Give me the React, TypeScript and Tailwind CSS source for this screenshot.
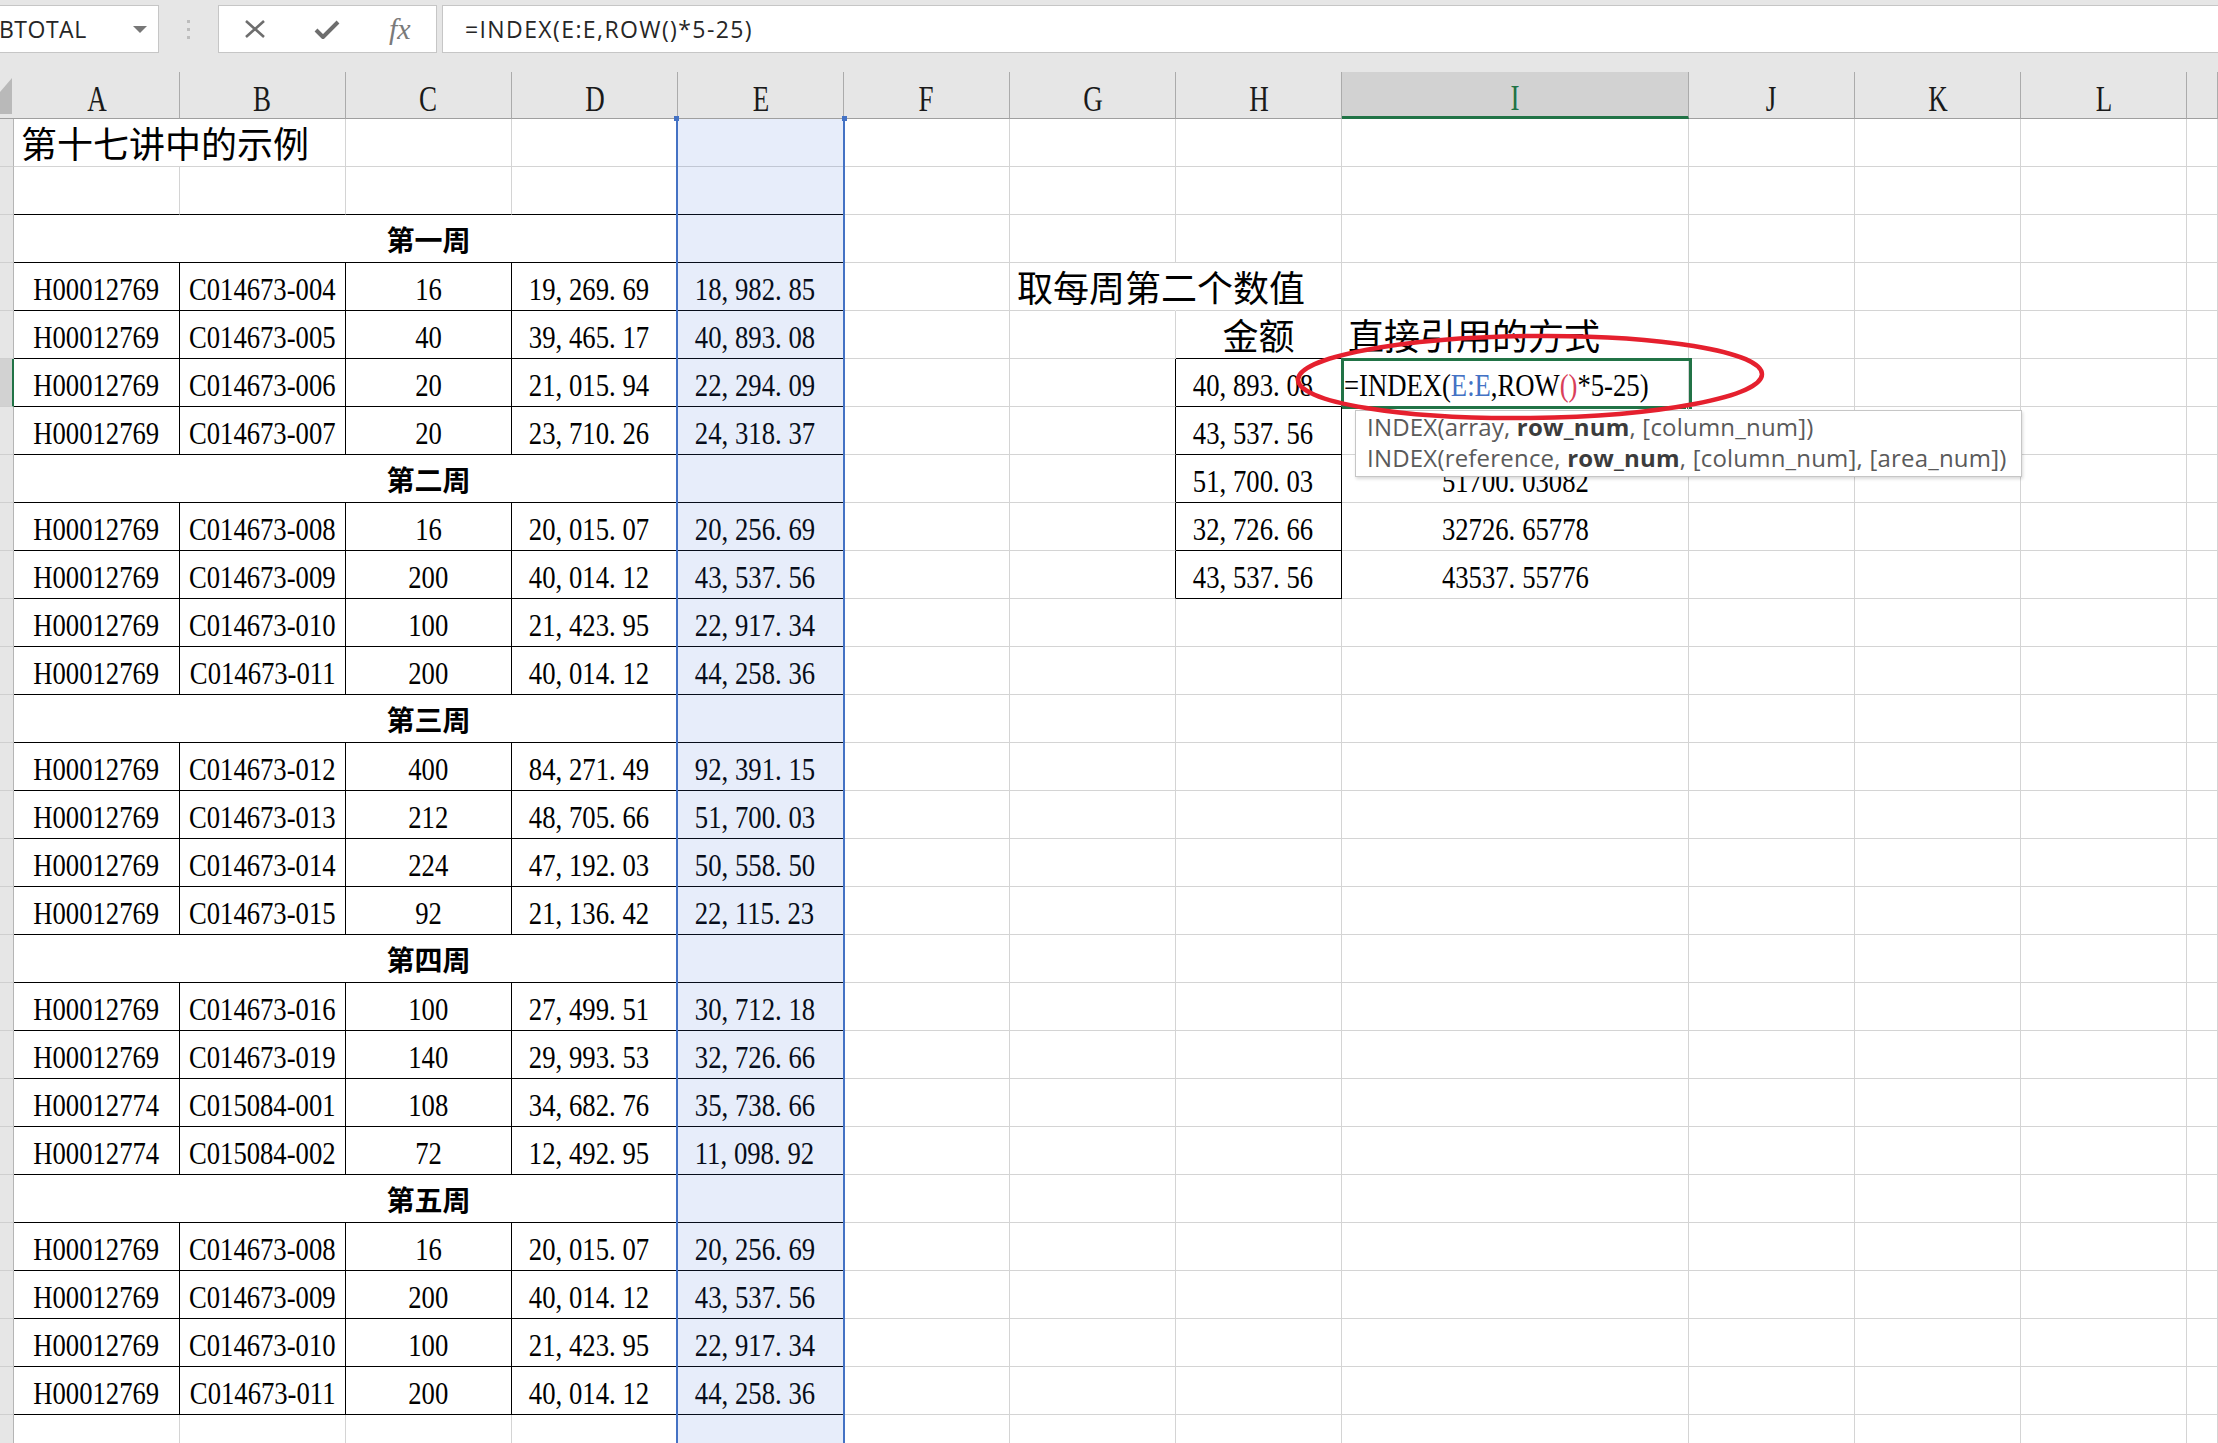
import React from 'react';

const SERIF = "font-['Liberation_Serif','Noto_Sans_CJK_SC',serif]";
const UI = "font-['Open_Sans','Noto_Sans_CJK_SC',sans-serif]";
const GRID =
  'grid grid-cols-[14px_166px_166px_166px_166px_166px_166px_166px_166px_347px_166px_166px_166px_1fr]';
const LETTERS = ['A', 'B', 'C', 'D', 'E', 'F', 'G', 'H', 'I', 'J', 'K', 'L', 'M'];
const RIGHT_COLS = ['F', 'G', 'H', 'I', 'J', 'K', 'L', 'M'];

type DataRow = [string, string, string, string, string];

const weeks: { title: string; rows: DataRow[] }[] = [
  {
    title: '第一周',
    rows: [
      ['H00012769', 'C014673-004', '16', '19,269.69', '18,982.85'],
      ['H00012769', 'C014673-005', '40', '39,465.17', '40,893.08'],
      ['H00012769', 'C014673-006', '20', '21,015.94', '22,294.09'],
      ['H00012769', 'C014673-007', '20', '23,710.26', '24,318.37'],
    ],
  },
  {
    title: '第二周',
    rows: [
      ['H00012769', 'C014673-008', '16', '20,015.07', '20,256.69'],
      ['H00012769', 'C014673-009', '200', '40,014.12', '43,537.56'],
      ['H00012769', 'C014673-010', '100', '21,423.95', '22,917.34'],
      ['H00012769', 'C014673-011', '200', '40,014.12', '44,258.36'],
    ],
  },
  {
    title: '第三周',
    rows: [
      ['H00012769', 'C014673-012', '400', '84,271.49', '92,391.15'],
      ['H00012769', 'C014673-013', '212', '48,705.66', '51,700.03'],
      ['H00012769', 'C014673-014', '224', '47,192.03', '50,558.50'],
      ['H00012769', 'C014673-015', '92', '21,136.42', '22,115.23'],
    ],
  },
  {
    title: '第四周',
    rows: [
      ['H00012769', 'C014673-016', '100', '27,499.51', '30,712.18'],
      ['H00012769', 'C014673-019', '140', '29,993.53', '32,726.66'],
      ['H00012774', 'C015084-001', '108', '34,682.76', '35,738.66'],
      ['H00012774', 'C015084-002', '72', '12,492.95', '11,098.92'],
    ],
  },
  {
    title: '第五周',
    rows: [
      ['H00012769', 'C014673-008', '16', '20,015.07', '20,256.69'],
      ['H00012769', 'C014673-009', '200', '40,014.12', '43,537.56'],
      ['H00012769', 'C014673-010', '100', '21,423.95', '22,917.34'],
      ['H00012769', 'C014673-011', '200', '40,014.12', '44,258.36'],
    ],
  },
];

type Left =
  | { kind: 'title' }
  | { kind: 'blank' }
  | { kind: 'week'; title: string }
  | { kind: 'data'; cells: DataRow }
  | { kind: 'empty' };

const leftRows: Left[] = [{ kind: 'title' }, { kind: 'blank' }];
weeks.forEach((w) => {
  leftRows.push({ kind: 'week', title: w.title });
  w.rows.forEach((cells) => leftRows.push({ kind: 'data', cells }));
});
leftRows.push({ kind: 'empty' });

// H6:H10 and I8:I10 (I7 sits under the tooltip)
const amounts = ['40,893.08', '43,537.56', '51,700.03', '32,726.66', '43,537.56'];
const direct = ['', '', '51700.03082', '32726.65778', '43537.55776'];

const base = 'flex min-w-0 items-center whitespace-nowrap leading-none pt-[6px]';

// half-width latin in the sheet font is tall and narrow, punctuation takes a full half-width slot
const Narrow: React.FC<{ children: React.ReactNode; left?: boolean }> = ({ children, left }) => (
  <span className={`inline-block scale-x-[0.86] text-[31px] ${left ? 'origin-left' : ''}`}>{children}</span>
);

function Num({ value }: { value: string }) {
  const parts = value.split(/([,.])/);
  return (
    <Narrow>
      {parts.map((p, i) =>
        p === ',' || p === '.' ? (
          <span key={i} className="mr-[8px]">
            {p}
          </span>
        ) : (
          <React.Fragment key={i}>{p}</React.Fragment>
        ),
      )}
    </Narrow>
  );
}

function LeftCells({ row }: { row: Left }) {
  if (row.kind === 'week') {
    return (
      <div className={`${base} col-span-5 justify-center border-r border-b border-black text-[28px] font-bold`}>
        {row.title}
      </div>
    );
  }
  if (row.kind === 'data') {
    return (
      <>
        {row.cells.map((v, i) => (
          <div
            key={i}
            className={`${base} justify-center border-r border-b border-black ${i >= 3 ? 'pr-3' : ''}`}
          >
            {i >= 3 ? <Num value={v} /> : <Narrow>{v}</Narrow>}
          </div>
        ))}
      </>
    );
  }
  if (row.kind === 'title') {
    return (
      <>
        <div className={`${base} justify-start border-b border-b-[#d4d4d4] pl-[7px] text-[36px]`}>
          第十七讲中的示例
        </div>
        <div className="border-r border-b border-[#d4d4d4]" />
        <div className="border-r border-b border-[#d4d4d4]" />
        <div className="border-r border-b border-[#d4d4d4]" />
        <div className="border-r border-b border-[#d4d4d4]" />
      </>
    );
  }
  if (row.kind === 'blank') {
    return (
      <>
        {[0, 1, 2, 3, 4].map((i) => (
          <div key={i} className="border-r border-b border-r-[#d4d4d4] border-b-black" />
        ))}
      </>
    );
  }
  return (
    <>
      {[0, 1, 2, 3, 4].map((i) => (
        <div key={i} className="border-r border-b border-[#d4d4d4]" />
      ))}
    </>
  );
}

function RightCells({ r }: { r: number }) {
  return (
    <>
      {RIGHT_COLS.map((col) => {
        let rb = 'border-r-[#d4d4d4]';
        let bb = 'border-b-[#d4d4d4]';
        let align = 'justify-center';
        let content: React.ReactNode = null;
        let active = false;

        if (col === 'G' && r === 4) {
          rb = 'border-r-transparent';
          align = 'justify-start pl-[7px] text-[36px]';
          content = '取每周第二个数值';
        }
        if (col === 'G' && r >= 6 && r <= 10) rb = 'border-r-black';
        if (col === 'H' && r === 5) {
          bb = 'border-b-black';
          align = 'justify-center text-[36px]';
          content = '金额';
        }
        if (col === 'H' && r >= 6 && r <= 10) {
          rb = 'border-r-black';
          bb = 'border-b-black';
          align = 'justify-center pr-3';
          content = <Num value={amounts[r - 6]} />;
        }
        if (col === 'I' && r === 5) {
          align = 'justify-start pl-[6px] text-[36px]';
          content = '直接引用的方式';
        }
        if (col === 'I' && r === 6) {
          active = true;
          align = 'justify-start pl-[2px]';
          content = (
            <Narrow left>
              =INDEX(<span className="text-[#4472c4]">E:E</span>,ROW
              <span className="text-[#d9405a]">()</span>*5-25)
            </Narrow>
          );
        }
        if (col === 'I' && r >= 8 && r <= 10) content = <Num value={direct[r - 6]} />;

        return (
          <div key={col} className={`${base} relative border-r border-b ${rb} ${bb} ${align}`}>
            {content}
            {active && (
              <>
                <div className="pointer-events-none absolute -left-px -top-px h-[51px] w-[351px] border-[3px] border-[#217346]" />
                <div className="pointer-events-none absolute -right-[5px] -bottom-[4px] h-[7px] w-[7px] border border-white bg-[#217346]" />
              </>
            )}
          </div>
        );
      })}
    </>
  );
}

function FormulaBar() {
  return (
    <div className={`flex h-[72px] items-start bg-[#e6e6e6] pt-[5px] ${UI}`}>
      <div className="flex h-[48px] w-[159px] items-center justify-between border border-l-0 border-[#c6c6c6] bg-white pr-[11px] text-[23px] text-[#262626]">
        <span className="-ml-[1px] tracking-[0.5px]">BTOTAL</span>
        <svg width="14" height="7" viewBox="0 0 14 7">
          <polygon points="0,0 14,0 7,7" fill="#777" />
        </svg>
      </div>
      <div className="flex h-[48px] w-[59px] flex-col items-center justify-center gap-[5px]">
        <span className="h-[3px] w-[3px] bg-[#bdbdbd]" />
        <span className="h-[3px] w-[3px] bg-[#bdbdbd]" />
        <span className="h-[3px] w-[3px] bg-[#bdbdbd]" />
      </div>
      <div className="flex h-[48px] w-[219px] items-center border border-[#c6c6c6] bg-white">
        <div className="flex flex-1 justify-center">
          <svg width="22" height="20" viewBox="0 0 22 20">
            <path d="M2 2 L20 18 M20 2 L2 18" stroke="#6e6e6e" strokeWidth="2.6" fill="none" />
          </svg>
        </div>
        <div className="flex flex-1 justify-center">
          <svg width="26" height="21" viewBox="0 0 26 21">
            <path d="M2 11 L9 18 L24 3" stroke="#6e6e6e" strokeWidth="4" fill="none" strokeLinejoin="round" />
          </svg>
        </div>
        <div className="flex flex-1 justify-center">
          <span className="font-['Liberation_Serif',serif] text-[30px] italic leading-none text-[#7a7a7a]">fx</span>
        </div>
      </div>
      <div className="ml-[5px] flex h-[48px] flex-1 items-center border border-r-0 border-[#c6c6c6] bg-white pl-[22px] text-[23px] tracking-[1.4px] text-[#262626]">
        =INDEX(E:E,ROW()*5-25)
      </div>
    </div>
  );
}

function ColumnHeader() {
  return (
    <div className={`${GRID} h-[47px] grid-rows-[47px] bg-[#e6e6e6] ${SERIF}`}>
      <div className="relative border-b border-b-[#9f9f9f]">
        <svg className="absolute left-0 top-0" width="14" height="46" viewBox="0 0 14 46">
          <polygon points="12,6 12,42 0,42 0,20" fill="#b9b9b9" />
        </svg>
      </div>
      {LETTERS.map((l) => (
        <div
          key={l}
          className={`flex items-center justify-center border-r border-r-[#ababab] pt-[7px] leading-none ${
            l === 'I'
              ? 'border-b-[3px] border-b-[#217346] bg-[#d2d2d2] text-[#217346]'
              : 'border-b border-b-[#9f9f9f] text-[#1a1a1a]'
          }`}
        >
          {l !== 'M' && <span className="inline-block scale-x-[0.75] text-[36px]">{l}</span>}
        </div>
      ))}
    </div>
  );
}

export default function App() {
  return (
    <div className="relative h-[1443px] w-[2218px] overflow-hidden bg-white">
      <FormulaBar />
      <ColumnHeader />
      <div className={`${SERIF} text-black`}>
        {leftRows.map((row, idx) => {
          const r = idx + 1;
          return (
            <div key={r} className={`${GRID} h-[48px] grid-rows-[48px]`}>
              <div
                className={`border-b border-b-[#cfcfcf] ${
                  r === 6 ? 'border-r-2 border-r-[#217346] bg-[#d2d2d2]' : 'border-r border-r-[#b5b5b5] bg-[#e6e6e6]'
                }`}
              />
              <LeftCells row={row} />
              <RightCells r={r} />
            </div>
          );
        })}
      </div>

      {/* E:E reference highlight */}
      <div className="pointer-events-none absolute bottom-0 left-[676px] top-[119px] w-[169px] border-x-2 border-[#4472c4] bg-[#3b6fd4]/[0.12]" />
      <div className="pointer-events-none absolute left-[674px] top-[116px] h-[5px] w-[5px] bg-[#4472c4]" />
      <div className="pointer-events-none absolute left-[842px] top-[116px] h-[5px] w-[5px] bg-[#4472c4]" />

      {/* function tooltip */}
      <div
        className={`absolute left-[1355px] top-[410px] h-[67px] w-[667px] border border-[#c6c6c6] bg-white pl-[11px] text-[24px] leading-[31px] tracking-[0.2px] text-[#5a5a5a] shadow-[1px_2px_3px_rgba(0,0,0,0.15)] ${UI}`}
      >
        <div>
          INDEX(array, <b className="font-bold text-[#3c3c3c]">row_num</b>, [column_num])
        </div>
        <div>
          INDEX(reference, <b className="font-bold text-[#3c3c3c]">row_num</b>, [column_num], [area_num])
        </div>
      </div>

      {/* red annotation */}
      <svg className="pointer-events-none absolute left-0 top-0" width="2218" height="1443">
        <ellipse
          cx="1530"
          cy="377"
          rx="232"
          ry="41"
          fill="none"
          stroke="#e5202e"
          strokeWidth="4.5"
          transform="rotate(-0.7 1530 377)"
        />
      </svg>
    </div>
  );
}
